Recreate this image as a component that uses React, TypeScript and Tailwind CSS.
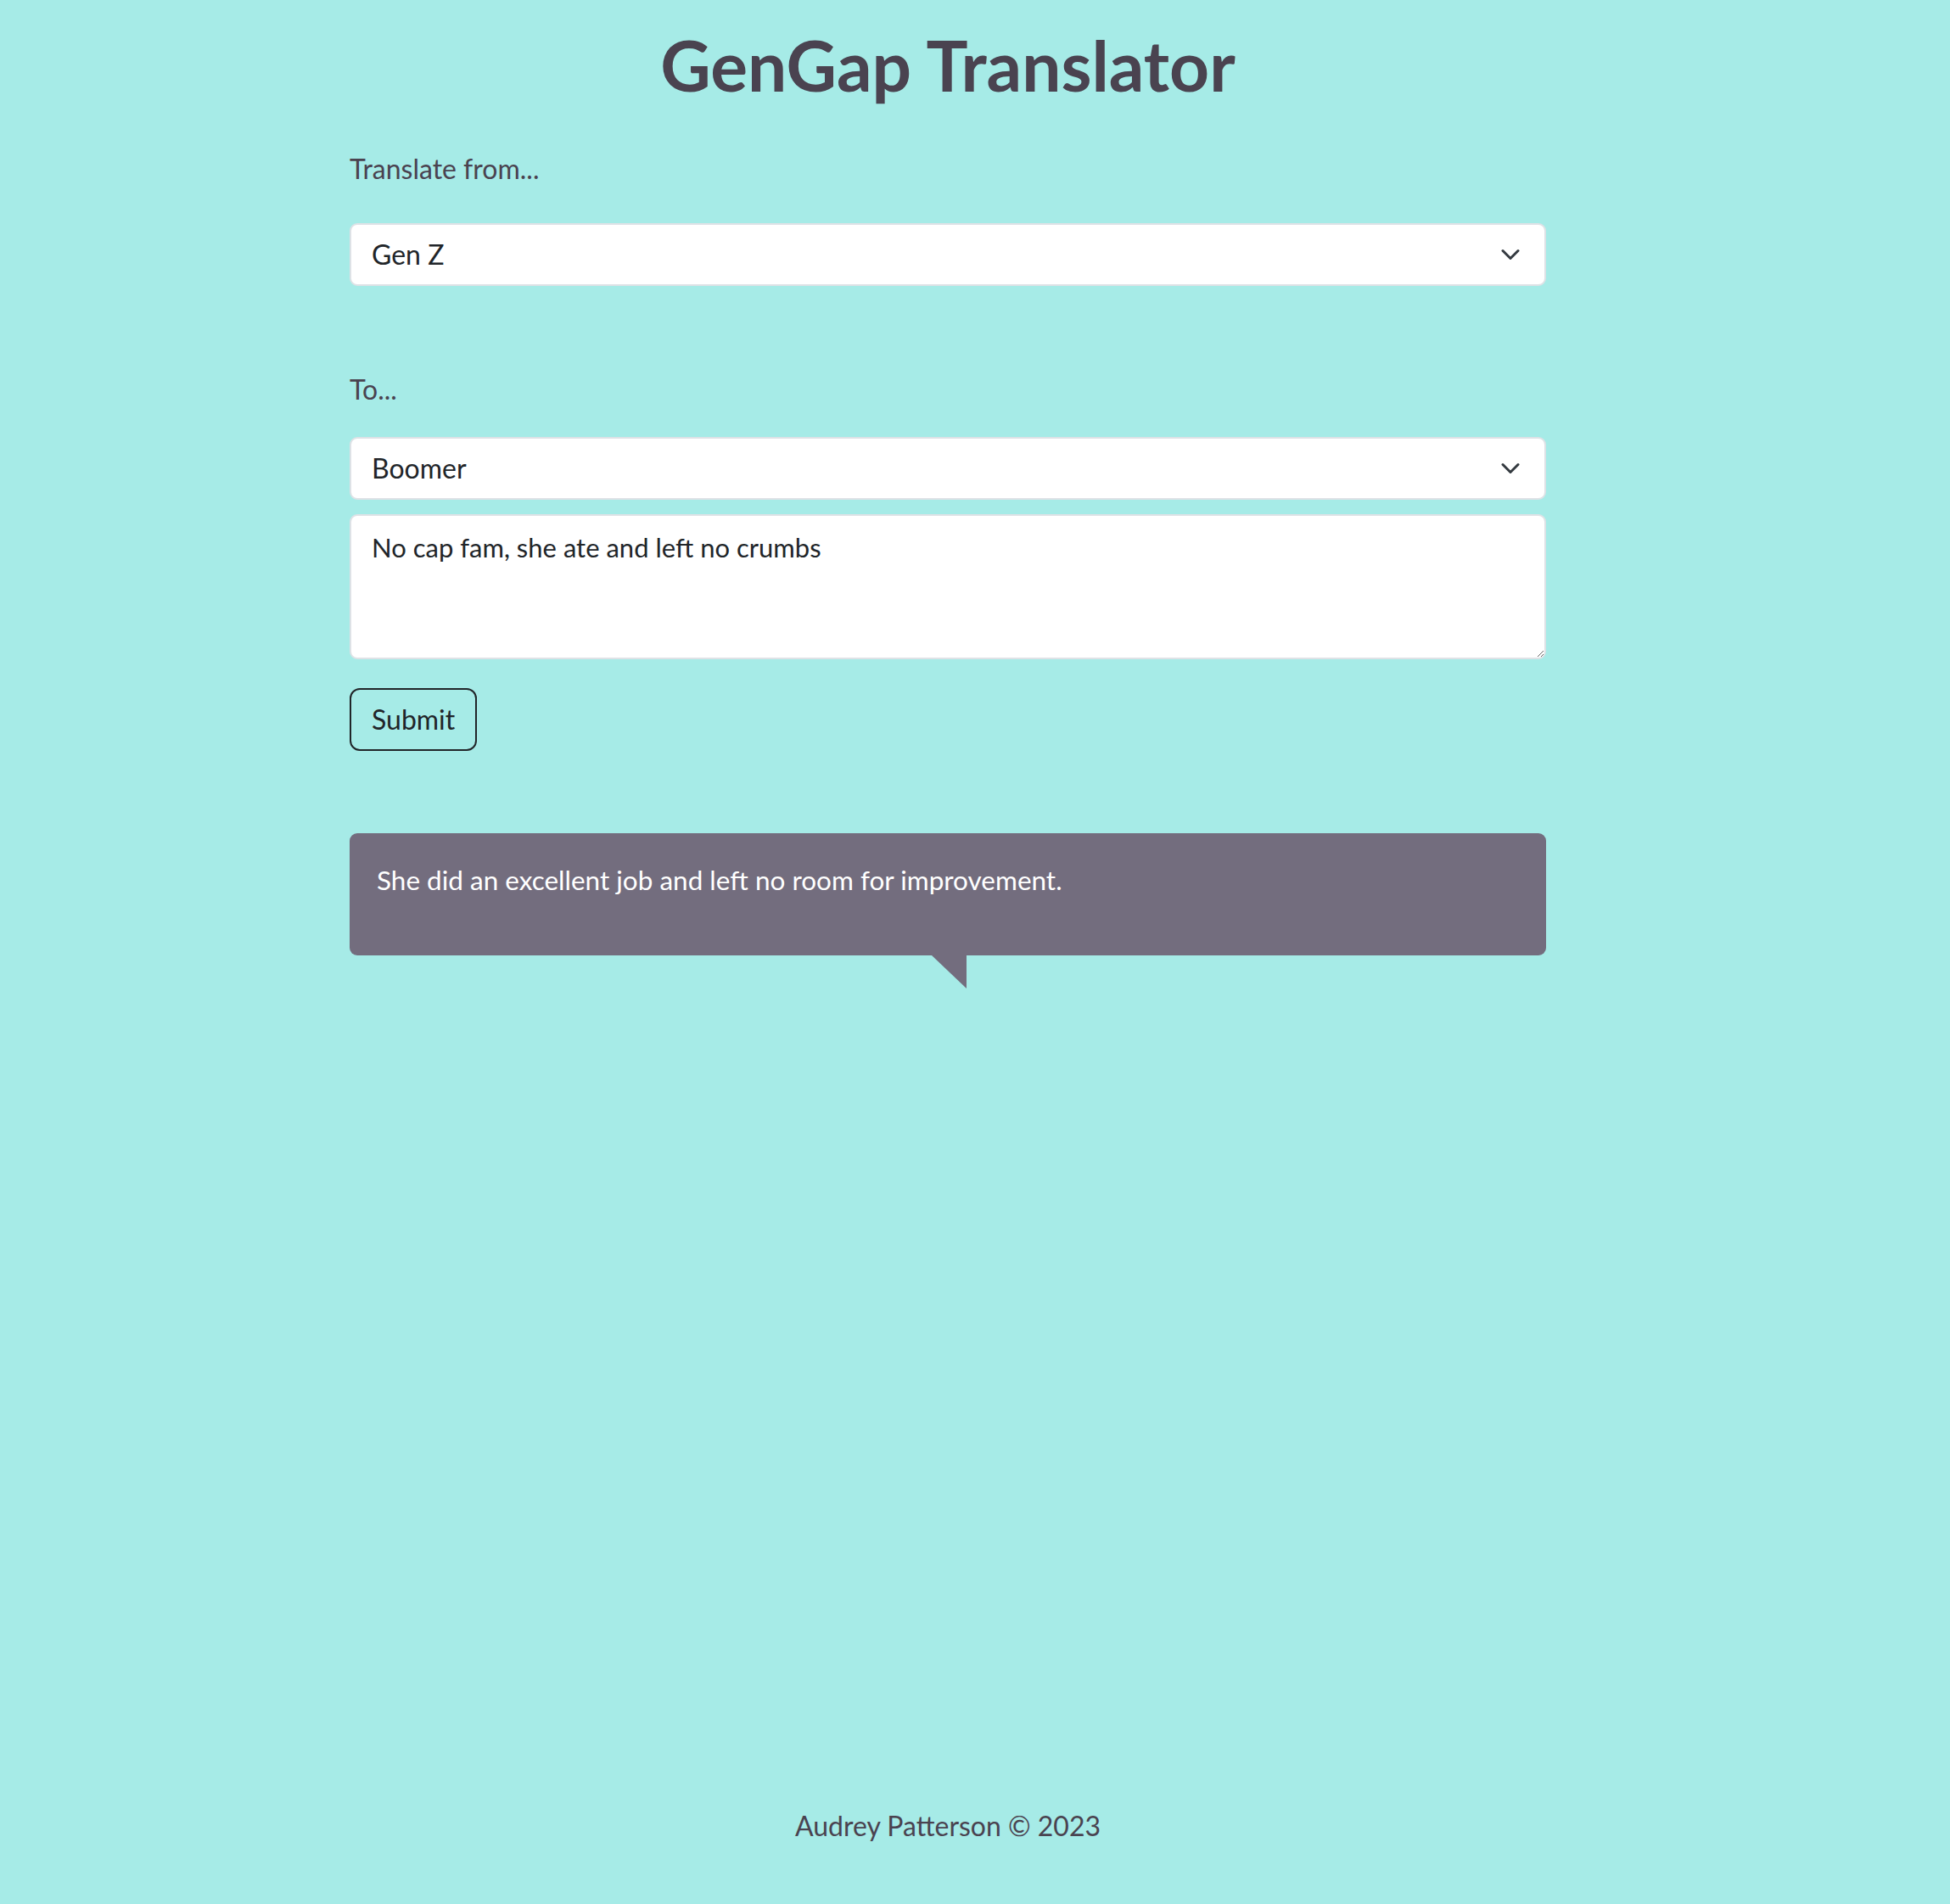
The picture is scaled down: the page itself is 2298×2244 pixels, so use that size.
import React, { useState } from 'react';

const ChevronDown: React.FC = () => (
  <svg
    xmlns="http://www.w3.org/2000/svg"
    viewBox="0 0 16 16"
    className="w-[24px] h-[24px]"
    fill="none"
    stroke="#343a40"
    strokeWidth={2}
    strokeLinecap="round"
    strokeLinejoin="round"
  >
    <path d="m2 5 6 6 6-6" />
  </svg>
);

const GenSelect: React.FC<{ value: string; onChange: (v: string) => void }> = ({ value, onChange }) => (
  <div className="relative">
    <select
      value={value}
      onChange={(e) => onChange(e.target.value)}
      className="appearance-none block w-full h-[74px] bg-white border-2 border-[#dee2e6] rounded-[9px] pl-[24px] pr-[60px] text-[32px] text-[#212529] outline-none"
    >
      <option>Gen Z</option>
      <option>Millennial</option>
      <option>Gen X</option>
      <option>Boomer</option>
    </select>
    <span className="pointer-events-none absolute right-[30px] top-1/2 -translate-y-1/2">
      <ChevronDown />
    </span>
  </div>
);

const App: React.FC = () => {
  const [from, setFrom] = useState('Gen Z');
  const [to, setTo] = useState('Boomer');
  const [text, setText] = useState('No cap fam, she ate and left no crumbs');

  return (
    <div className="min-h-screen bg-[#a6ebe7] font-['Lato','Liberation_Sans',sans-serif]">
      <div className="w-[2234px] min-h-screen flex flex-col">
        <h1 className="pt-[26px] text-center text-[82px] leading-[100px] font-bold text-[#4a4350]">
          GenGap Translator
        </h1>

        <main className="w-[1410px] mx-auto">
          <label className="block mt-[49px] text-[32px] leading-[48px] text-[#4a4350]">
            Translate from...
          </label>
          <div className="mt-[40px]">
            <GenSelect value={from} onChange={setFrom} />
          </div>

          <label className="block mt-[98px] text-[32px] leading-[48px] text-[#4a4350]">To...</label>
          <div className="mt-[32px]">
            <GenSelect value={to} onChange={setTo} />
          </div>

          <textarea
            value={text}
            onChange={(e) => setText(e.target.value)}
            className="block mt-[17px] w-full h-[171px] bg-white border-2 border-[#dee2e6] rounded-[9px] px-[24px] pt-[13px] pb-[12px] text-[31px] leading-[48px] text-[#212529] outline-none"
          />

          <button
            type="button"
            className="mt-[34px] h-[74px] px-[24px] border-2 border-[#212529] rounded-[12px] text-[32px] text-[#212529]"
          >
            Submit
          </button>

          <div className="relative mt-[97px] h-[144px] bg-[#736d7e] rounded-[9px] px-[32px] pt-[33px]">
            <p className="text-[31.5px] leading-[45px] text-white">
              She did an excellent job and left no room for improvement.
            </p>
            <span className="absolute top-full left-[686px] w-0 h-0 border-t-[39px] border-t-[#736d7e] border-l-[41px] border-l-transparent" />
          </div>
        </main>

        <footer className="mt-auto pb-[69px] text-center text-[32px] leading-[46px] text-[#4a4350]">
          Audrey Patterson © 2023
        </footer>
      </div>
    </div>
  );
};

export default App;
